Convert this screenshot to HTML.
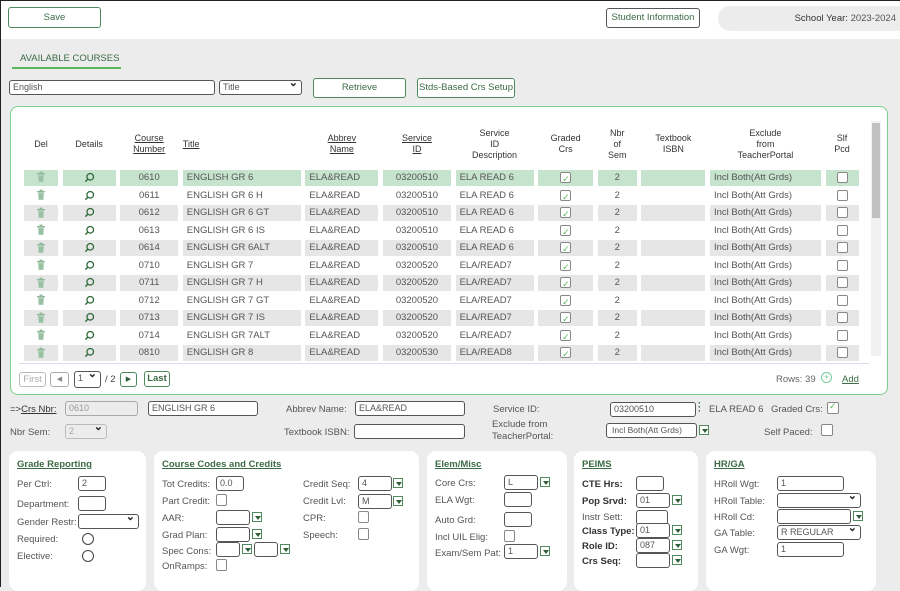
<!DOCTYPE html>
<html><head><meta charset="utf-8"><style>
*{box-sizing:border-box;margin:0;padding:0}
body{width:900px;height:587px;overflow:hidden;background:#ececec;font-family:"Liberation Sans",sans-serif;font-size:9.5px;color:#444;position:relative;border-left:1px solid #222;border-top:1px solid #222}
.a{position:absolute}
.btn{position:absolute;border:1px solid #4f8a5c;border-radius:3px;background:#fff;color:#3c6b45;text-align:center;font-size:9.5px}
.inp{position:absolute;border:1px solid #555;border-radius:3px;background:#fff;height:15px;font-size:9px;padding-left:3px;line-height:13px;color:#555}
.grid{position:absolute;left:23px;display:grid;grid-template-columns:34px 53px 58px 118px 73px 68px 78px 55px 39px 64px 111px 33px;column-gap:4.6px}
.rows{top:169px;grid-auto-rows:16px;row-gap:1.55px}
.rows div{line-height:16px;font-size:9.5px;color:#555;white-space:nowrap}
.g div{background:#e6e6e6}.s div{background:#c6e3cd}
.c{text-align:center}.l{padding-left:4px;text-align:left}
.hd{top:124px;height:38px;align-items:center}
.hd div{text-align:center;font-size:9px;color:#333;line-height:11px}
.u{text-decoration:underline}
.cb{display:inline-block;width:11px;height:11px;border:1px solid #888;border-radius:2px;vertical-align:middle;background:#fff;position:relative}
.cb.a{position:absolute}
.ck:after{content:"✓";position:absolute;left:1px;top:-2px;font-size:9px;color:#5cb85c}
.dd{display:inline-block;width:10px;height:10px;border:1px solid #4f8a5c;position:absolute;background:#fff}
.dd:after{content:"";position:absolute;left:1.5px;top:3px;border-left:3px solid transparent;border-right:3px solid transparent;border-top:4px solid #2f5f38}
.panel{position:absolute;top:450px;height:140px;background:#fff;border-radius:9px}
.pt{position:absolute;color:#3c6b45;text-decoration:underline;font-size:9.5px;font-weight:bold}
.lb{position:absolute;font-size:9.5px;color:#555}
.rad{position:absolute;width:12px;height:12px;border:1px solid #444;border-radius:50%;background:#fff}
.sel:after{content:"⌄";position:absolute;right:3px;top:-4px;font-size:11px;color:#222;font-weight:bold}
svg{vertical-align:middle}
</style></head><body>
<svg width="0" height="0" style="position:absolute"><defs>
<symbol id="tr" viewBox="0 0 10 12"><rect x="1" y="2" width="8" height="1.3" fill="#8fb89a"/><rect x="3.5" y="0.6" width="3" height="1.5" fill="#8fb89a"/><path d="M2 3.5h6l-0.6 7.5h-4.8z" fill="#a9cdb2"/><path d="M4 5v5M6 5v5" stroke="#7fa98a" stroke-width="0.7"/></symbol>
<symbol id="mg" viewBox="0 0 12 12"><circle cx="6.8" cy="5.2" r="3.6" fill="none" stroke="#2f6b3a" stroke-width="1.4"/><path d="M4.2 7.8L1.5 10.5" stroke="#2f6b3a" stroke-width="1.6"/></symbol>
</defs></svg>
<div class="a" style="left:0;top:0;width:900px;height:38px;background:#fff"></div>
<div class="btn" style="left:7px;top:6px;width:93px;height:21px;line-height:19px">Save</div>
<div class="btn" style="left:605px;top:7px;width:94px;height:20px;line-height:18px;border-color:#555">Student Information</div>
<div class="a" style="left:717px;top:5px;width:190px;height:25px;background:#ececec;border-radius:12px;text-align:right;padding-right:12px;line-height:25px;font-size:9.5px;color:#333">School Year: <span style="color:#555">2023-2024</span></div>
<div class="a" style="left:19px;top:52px;color:#3c6b45;font-size:9.5px">AVAILABLE COURSES</div>
<div class="a" style="left:11px;top:66px;width:109px;height:2px;background:#5cb85c"></div>
<div class="inp" style="left:8px;top:79px;width:206px;height:15px">English</div>
<div class="inp sel" style="left:218px;top:79px;width:83px;height:15px">Title</div>
<div class="btn" style="left:312px;top:77px;width:93px;height:20px;line-height:18px">Retrieve</div>
<div class="btn" style="left:416px;top:77px;width:98px;height:20px;line-height:18px">Stds-Based Crs Setup</div>
<div class="a" style="left:9px;top:105px;width:878px;height:289px;background:#fff;border:1px solid #7ccf8c;border-radius:8px"></div>
<div class="a" style="left:870px;top:120px;width:10px;height:235px;background:#f1f1f1"></div>
<div class="a" style="left:871px;top:122px;width:8px;height:95px;background:#c1c1c1"></div>
<div class="grid hd">
<div>Del</div><div>Details</div><div class="u">Course<br>Number</div><div class="u" style="text-align:left">Title</div><div class="u">Abbrev<br>Name</div><div class="u">Service<br>ID</div><div>Service<br>ID<br>Description</div><div>Graded<br>Crs</div><div>Nbr<br>of<br>Sem</div><div>Textbook<br>ISBN</div><div>Exclude<br>from<br>TeacherPortal</div><div>Slf<br>Pcd</div>
</div>
<div class="grid rows">
<div class="s" style="display:contents"><div class="c"><svg width="10" height="12"><use href="#tr"/></svg></div><div class="c"><svg width="11" height="11"><use href="#mg"/></svg></div><div class="c">0610</div><div class="l">ENGLISH GR 6</div><div class="l">ELA&amp;READ</div><div class="c">03200510</div><div class="l">ELA READ 6</div><div class="c"><span class="cb ck"></span></div><div class="c">2</div><div></div><div class="l">Incl Both(Att Grds)</div><div class="c"><span class="cb"></span></div></div>
<div style="display:contents"><div class="c"><svg width="10" height="12"><use href="#tr"/></svg></div><div class="c"><svg width="11" height="11"><use href="#mg"/></svg></div><div class="c">0611</div><div class="l">ENGLISH GR 6 H</div><div class="l">ELA&amp;READ</div><div class="c">03200510</div><div class="l">ELA READ 6</div><div class="c"><span class="cb ck"></span></div><div class="c">2</div><div></div><div class="l">Incl Both(Att Grds)</div><div class="c"><span class="cb"></span></div></div>
<div class="g" style="display:contents"><div class="c"><svg width="10" height="12"><use href="#tr"/></svg></div><div class="c"><svg width="11" height="11"><use href="#mg"/></svg></div><div class="c">0612</div><div class="l">ENGLISH GR 6 GT</div><div class="l">ELA&amp;READ</div><div class="c">03200510</div><div class="l">ELA READ 6</div><div class="c"><span class="cb ck"></span></div><div class="c">2</div><div></div><div class="l">Incl Both(Att Grds)</div><div class="c"><span class="cb"></span></div></div>
<div style="display:contents"><div class="c"><svg width="10" height="12"><use href="#tr"/></svg></div><div class="c"><svg width="11" height="11"><use href="#mg"/></svg></div><div class="c">0613</div><div class="l">ENGLISH GR 6 IS</div><div class="l">ELA&amp;READ</div><div class="c">03200510</div><div class="l">ELA READ 6</div><div class="c"><span class="cb ck"></span></div><div class="c">2</div><div></div><div class="l">Incl Both(Att Grds)</div><div class="c"><span class="cb"></span></div></div>
<div class="g" style="display:contents"><div class="c"><svg width="10" height="12"><use href="#tr"/></svg></div><div class="c"><svg width="11" height="11"><use href="#mg"/></svg></div><div class="c">0614</div><div class="l">ENGLISH GR 6ALT</div><div class="l">ELA&amp;READ</div><div class="c">03200510</div><div class="l">ELA READ 6</div><div class="c"><span class="cb ck"></span></div><div class="c">2</div><div></div><div class="l">Incl Both(Att Grds)</div><div class="c"><span class="cb"></span></div></div>
<div style="display:contents"><div class="c"><svg width="10" height="12"><use href="#tr"/></svg></div><div class="c"><svg width="11" height="11"><use href="#mg"/></svg></div><div class="c">0710</div><div class="l">ENGLISH GR 7</div><div class="l">ELA&amp;READ</div><div class="c">03200520</div><div class="l">ELA/READ7</div><div class="c"><span class="cb ck"></span></div><div class="c">2</div><div></div><div class="l">Incl Both(Att Grds)</div><div class="c"><span class="cb"></span></div></div>
<div class="g" style="display:contents"><div class="c"><svg width="10" height="12"><use href="#tr"/></svg></div><div class="c"><svg width="11" height="11"><use href="#mg"/></svg></div><div class="c">0711</div><div class="l">ENGLISH GR 7 H</div><div class="l">ELA&amp;READ</div><div class="c">03200520</div><div class="l">ELA/READ7</div><div class="c"><span class="cb ck"></span></div><div class="c">2</div><div></div><div class="l">Incl Both(Att Grds)</div><div class="c"><span class="cb"></span></div></div>
<div style="display:contents"><div class="c"><svg width="10" height="12"><use href="#tr"/></svg></div><div class="c"><svg width="11" height="11"><use href="#mg"/></svg></div><div class="c">0712</div><div class="l">ENGLISH GR 7 GT</div><div class="l">ELA&amp;READ</div><div class="c">03200520</div><div class="l">ELA/READ7</div><div class="c"><span class="cb ck"></span></div><div class="c">2</div><div></div><div class="l">Incl Both(Att Grds)</div><div class="c"><span class="cb"></span></div></div>
<div class="g" style="display:contents"><div class="c"><svg width="10" height="12"><use href="#tr"/></svg></div><div class="c"><svg width="11" height="11"><use href="#mg"/></svg></div><div class="c">0713</div><div class="l">ENGLISH GR 7 IS</div><div class="l">ELA&amp;READ</div><div class="c">03200520</div><div class="l">ELA/READ7</div><div class="c"><span class="cb ck"></span></div><div class="c">2</div><div></div><div class="l">Incl Both(Att Grds)</div><div class="c"><span class="cb"></span></div></div>
<div style="display:contents"><div class="c"><svg width="10" height="12"><use href="#tr"/></svg></div><div class="c"><svg width="11" height="11"><use href="#mg"/></svg></div><div class="c">0714</div><div class="l">ENGLISH GR 7ALT</div><div class="l">ELA&amp;READ</div><div class="c">03200520</div><div class="l">ELA/READ7</div><div class="c"><span class="cb ck"></span></div><div class="c">2</div><div></div><div class="l">Incl Both(Att Grds)</div><div class="c"><span class="cb"></span></div></div>
<div class="g" style="display:contents"><div class="c"><svg width="10" height="12"><use href="#tr"/></svg></div><div class="c"><svg width="11" height="11"><use href="#mg"/></svg></div><div class="c">0810</div><div class="l">ENGLISH GR 8</div><div class="l">ELA&amp;READ</div><div class="c">03200530</div><div class="l">ELA/READ8</div><div class="c"><span class="cb ck"></span></div><div class="c">2</div><div></div><div class="l">Incl Both(Att Grds)</div><div class="c"><span class="cb"></span></div></div>
</div>
<div class="a" style="left:18px;top:362px;width:850px;height:1px;background:#dde"></div>
<div class="btn" style="left:18px;top:371px;width:27px;height:15px;line-height:13px;border-color:#bbb;color:#aaa">First</div>
<div class="btn" style="left:49px;top:371px;width:19px;height:15px;line-height:13px;border-color:#aaa;color:#888;font-size:7px">◀</div>
<div class="inp sel" style="left:73px;top:370px;width:27px;height:17px">1</div>
<div class="a" style="left:104px;top:373px">/ 2</div>
<div class="btn" style="left:119px;top:371px;width:17px;height:15px;line-height:13px;font-size:7px;color:#2f5f38">▶</div>
<div class="btn" style="left:143px;top:370px;width:26px;height:16px;line-height:14px;font-weight:bold">Last</div>
<div class="a" style="left:775px;top:373px;color:#666">Rows: 39</div>
<div class="a" style="left:820px;top:371px;width:11px;height:11px;border:1px solid #7c9;border-radius:50%;color:#7c9;font-size:9px;line-height:9px;text-align:center">+</div>
<div class="a u" style="left:841px;top:373px;color:#3c6b45">Add</div>

<div class="lb" style="left:9px;top:403px;color:#333">=&gt;<span class="u">Crs Nbr:</span></div>
<div class="inp" style="left:64px;top:400px;width:73px;border-color:#aaa;background:#ececec;color:#999">0610</div>
<div class="inp" style="left:147px;top:400px;width:110px">ENGLISH GR 6</div>
<div class="lb" style="left:285px;top:403px">Abbrev Name:</div>
<div class="inp" style="left:354px;top:400px;width:110px">ELA&amp;READ</div>
<div class="lb" style="left:492px;top:403px">Service ID:</div>
<div class="inp" style="left:609px;top:401px;width:86px">03200510</div>
<div class="a" style="left:697px;top:401px;color:#2f5f38;font-weight:bold;line-height:4px">·<br>·<br>·</div>
<div class="lb" style="left:708px;top:403px">ELA READ 6</div>
<div class="lb" style="left:770px;top:403px">Graded Crs:</div>
<span class="cb ck a" style="left:826px;top:401px;width:12px;height:12px"></span>
<div class="lb" style="left:9px;top:426px">Nbr Sem:</div>
<div class="inp sel" style="left:64px;top:423px;width:42px;border-color:#bbb;background:#ececec;color:#aaa">2</div>
<div class="lb" style="left:283px;top:426px">Textbook ISBN:</div>
<div class="inp" style="left:353px;top:423px;width:111px"></div>
<div class="lb" style="left:491px;top:418px;line-height:12px">Exclude from<br>TeacherPortal:</div>
<div class="inp" style="left:605px;top:422px;width:91px;font-size:8.5px;padding-left:5px">Incl Both(Att Grds)</div>
<span class="dd" style="left:698px;top:424px"></span>
<div class="lb" style="left:763px;top:426px">Self Paced:</div>
<span class="cb a" style="left:820px;top:423px;width:12px;height:12px"></span>

<div class="panel" style="left:8px;width:137px"></div>
<div class="pt" style="left:16px;top:458px">Grade Reporting</div>
<div class="lb" style="left:16px;top:478px">Per Ctrl:</div><div class="inp" style="left:77px;top:475px;width:28px">2</div>
<div class="lb" style="left:16px;top:498px">Department:</div><div class="inp" style="left:77px;top:495px;width:28px"></div>
<div class="lb" style="left:16px;top:516px">Gender Restr:</div><div class="inp sel" style="left:77px;top:513px;width:61px"></div>
<div class="lb" style="left:16px;top:533px">Required:</div><div class="rad" style="left:81px;top:532px"></div>
<div class="lb" style="left:16px;top:550px">Elective:</div><div class="rad" style="left:81px;top:549px"></div>

<div class="panel" style="left:153px;width:265px"></div>
<div class="pt" style="left:161px;top:458px">Course Codes and Credits</div>
<div class="lb" style="left:161px;top:478px">Tot Credits:</div><div class="inp" style="left:215px;top:475px;width:28px">0.0</div>
<div class="lb" style="left:161px;top:495px">Part Credit:</div><span class="cb a" style="left:215px;top:493px;width:11px;height:12px"></span>
<div class="lb" style="left:161px;top:512px">AAR:</div><div class="inp" style="left:215px;top:509px;width:34px"></div><span class="dd" style="left:251px;top:511px"></span>
<div class="lb" style="left:161px;top:529px">Grad Plan:</div><div class="inp" style="left:215px;top:526px;width:34px"></div><span class="dd" style="left:251px;top:528px"></span>
<div class="lb" style="left:161px;top:545px">Spec Cons:</div><div class="inp" style="left:215px;top:541px;width:24px"></div><span class="dd" style="left:241px;top:543px"></span><div class="inp" style="left:253px;top:541px;width:24px"></div><span class="dd" style="left:279px;top:543px"></span>
<div class="lb" style="left:161px;top:560px">OnRamps:</div><span class="cb a" style="left:215px;top:558px;width:11px;height:12px"></span>
<div class="lb" style="left:302px;top:478px">Credit Seq:</div><div class="inp" style="left:357px;top:475px;width:34px">4</div><span class="dd" style="left:392px;top:477px"></span>
<div class="lb" style="left:302px;top:495px">Credit Lvl:</div><div class="inp" style="left:357px;top:493px;width:34px">M</div><span class="dd" style="left:392px;top:495px"></span>
<div class="lb" style="left:302px;top:512px">CPR:</div><span class="cb a" style="left:357px;top:510px;width:11px;height:12px"></span>
<div class="lb" style="left:302px;top:529px">Speech:</div><span class="cb a" style="left:357px;top:527px;width:11px;height:12px"></span>

<div class="panel" style="left:426px;width:140px"></div>
<div class="pt" style="left:434px;top:458px">Elem/Misc</div>
<div class="lb" style="left:434px;top:477px">Core Crs:</div><div class="inp" style="left:503px;top:474px;width:34px">L</div><span class="dd" style="left:539px;top:476px"></span>
<div class="lb" style="left:434px;top:494px">ELA Wgt:</div><div class="inp" style="left:503px;top:491px;width:28px"></div>
<div class="lb" style="left:434px;top:514px">Auto Grd:</div><div class="inp" style="left:503px;top:511px;width:28px"></div>
<div class="lb" style="left:434px;top:531px">Incl UIL Elig:</div><span class="cb a" style="left:503px;top:529px;width:11px;height:12px"></span>
<div class="lb" style="left:434px;top:547px">Exam/Sem Pat:</div><div class="inp" style="left:503px;top:543px;width:34px">1</div><span class="dd" style="left:539px;top:545px"></span>

<div class="panel" style="left:573px;width:124px"></div>
<div class="pt" style="left:581px;top:458px">PEIMS</div>
<div class="lb" style="left:581px;top:478px;font-weight:bold;color:#333">CTE Hrs:</div><div class="inp" style="left:635px;top:475px;width:28px"></div>
<div class="lb" style="left:581px;top:495px;font-weight:bold;color:#333">Pop Srvd:</div><div class="inp" style="left:635px;top:492px;width:34px">01</div><span class="dd" style="left:671px;top:494px"></span>
<div class="lb" style="left:581px;top:511px">Instr Sett:</div><div class="inp" style="left:635px;top:509px;width:32px"></div>
<div class="lb" style="left:581px;top:525px;font-weight:bold;color:#333">Class Type:</div><div class="inp" style="left:635px;top:522px;width:34px">01</div><span class="dd" style="left:671px;top:524px"></span>
<div class="lb" style="left:581px;top:540px;font-weight:bold;color:#333">Role ID:</div><div class="inp" style="left:635px;top:537px;width:34px">087</div><span class="dd" style="left:671px;top:539px"></span>
<div class="lb" style="left:581px;top:555px;font-weight:bold;color:#333">Crs Seq:</div><div class="inp" style="left:635px;top:552px;width:34px"></div><span class="dd" style="left:671px;top:554px"></span>

<div class="panel" style="left:705px;width:170px"></div>
<div class="pt" style="left:713px;top:458px">HR/GA</div>
<div class="lb" style="left:713px;top:478px">HRoll Wgt:</div><div class="inp" style="left:776px;top:475px;width:67px">1</div>
<div class="lb" style="left:713px;top:495px">HRoll Table:</div><div class="inp sel" style="left:776px;top:492px;width:84px"></div>
<div class="lb" style="left:713px;top:511px">HRoll Cd:</div><div class="inp" style="left:776px;top:508px;width:74px"></div><span class="dd" style="left:852px;top:510px"></span>
<div class="lb" style="left:713px;top:527px">GA Table:</div><div class="inp sel" style="left:776px;top:524px;width:84px">R REGULAR</div>
<div class="lb" style="left:713px;top:544px">GA Wgt:</div><div class="inp" style="left:776px;top:541px;width:67px">1</div>
</body></html>
